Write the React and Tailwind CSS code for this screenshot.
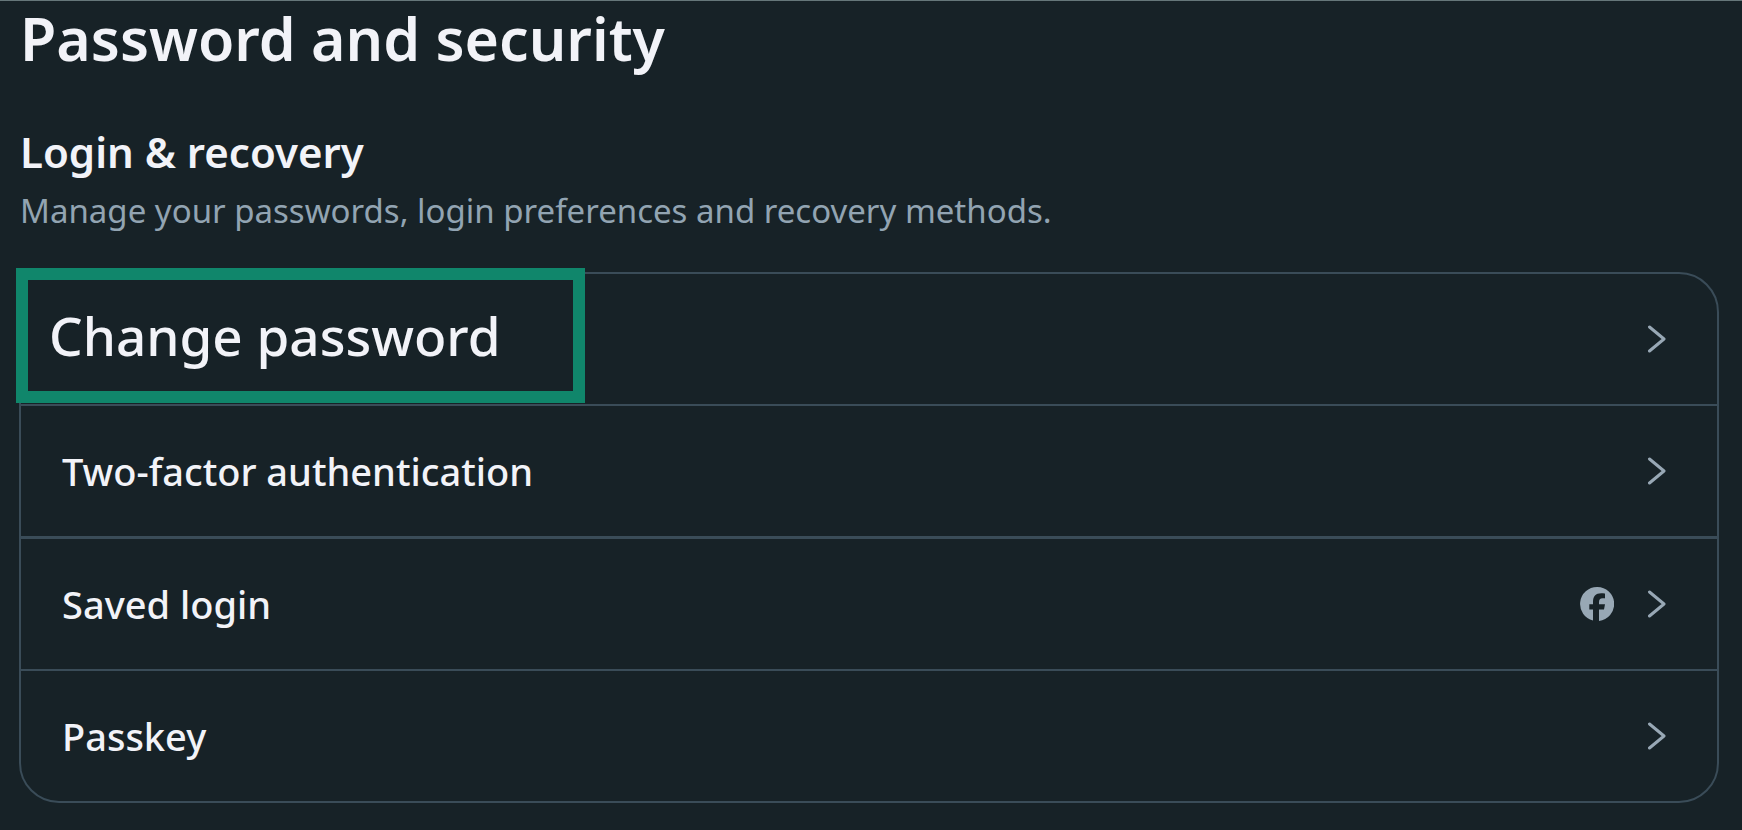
const items = [
  { label: 'Change password', highlighted: true },
  { label: 'Two-factor authentication' },
  { label: 'Saved login', facebook: true },
  { label: 'Passkey' },
];

function Chevron() {
  return (
    <svg className="w-5 h-8" viewBox="0 0 20 32" fill="none" stroke="currentColor" strokeWidth="3" strokeLinecap="round" strokeLinejoin="round" aria-hidden="true">
      <path d="M3.5 4 L18 16 L3.5 28" />
    </svg>
  );
}

function FacebookIcon() {
  return (
    <svg className="w-[34px] h-[34px]" viewBox="0 0 34 34" aria-hidden="true">
      <path
        fill="currentColor"
        d="M17 0 A17 17 0 0 0 13 33.5 V22.5 H9.3 V17.2 H13 V15 C13 9.3 15.6 6.2 21.2 6.2 C22.3 6.2 24.2 6.4 25 6.6 V11.4 C24.6 11.3 23.6 11.3 22.7 11.3 C20 11.3 19 12.6 19 15.2 V17.2 H25 L24 22.5 H19 V33.9 A17 17 0 0 0 17 0 Z"
      />
    </svg>
  );
}

export default function App() {
  return (
    <main className="min-h-screen bg-[#172227] border-t border-[#66777a] pl-5 pr-6 pb-7 font-['Noto_Sans',sans-serif] text-[#f2f3f8]">
      <h1 className="text-[59px] leading-[74px] font-semibold">Password and security</h1>

      <section className="mt-12">
        <h2 className="text-[42px] leading-[58px] font-semibold">Login &amp; recovery</h2>
        <p className="mt-1 text-[33px] leading-[52px] text-[#92a4b2]">
          Manage your passwords, login preferences and recovery methods.
        </p>

        <ul className="mt-[35px] -mx-px border-2 border-[#3a4c58] rounded-[40px] divide-y-2 divide-[#3a4c58]">
          {items.map((item) => (
            <li key={item.label} className="relative nth-2:border-b-3">
              <button type="button" className="flex items-center w-full h-[130px] pl-[41px] pr-[51px] text-left">
                {item.highlighted ? (
                  <span className="absolute -left-[5px] -top-[6px] flex items-center w-[569px] h-[135px] pl-[21px] bg-[#172227] border-12 border-[#10866b] text-[53px] font-medium">
                    {item.label}
                  </span>
                ) : (
                  <span className="text-[38px] leading-[52px] font-medium">{item.label}</span>
                )}
                <span className="ml-auto flex items-center gap-8 text-[#98a8b5]">
                  {item.facebook && <FacebookIcon />}
                  <Chevron />
                </span>
              </button>
            </li>
          ))}
        </ul>
      </section>
    </main>
  );
}
